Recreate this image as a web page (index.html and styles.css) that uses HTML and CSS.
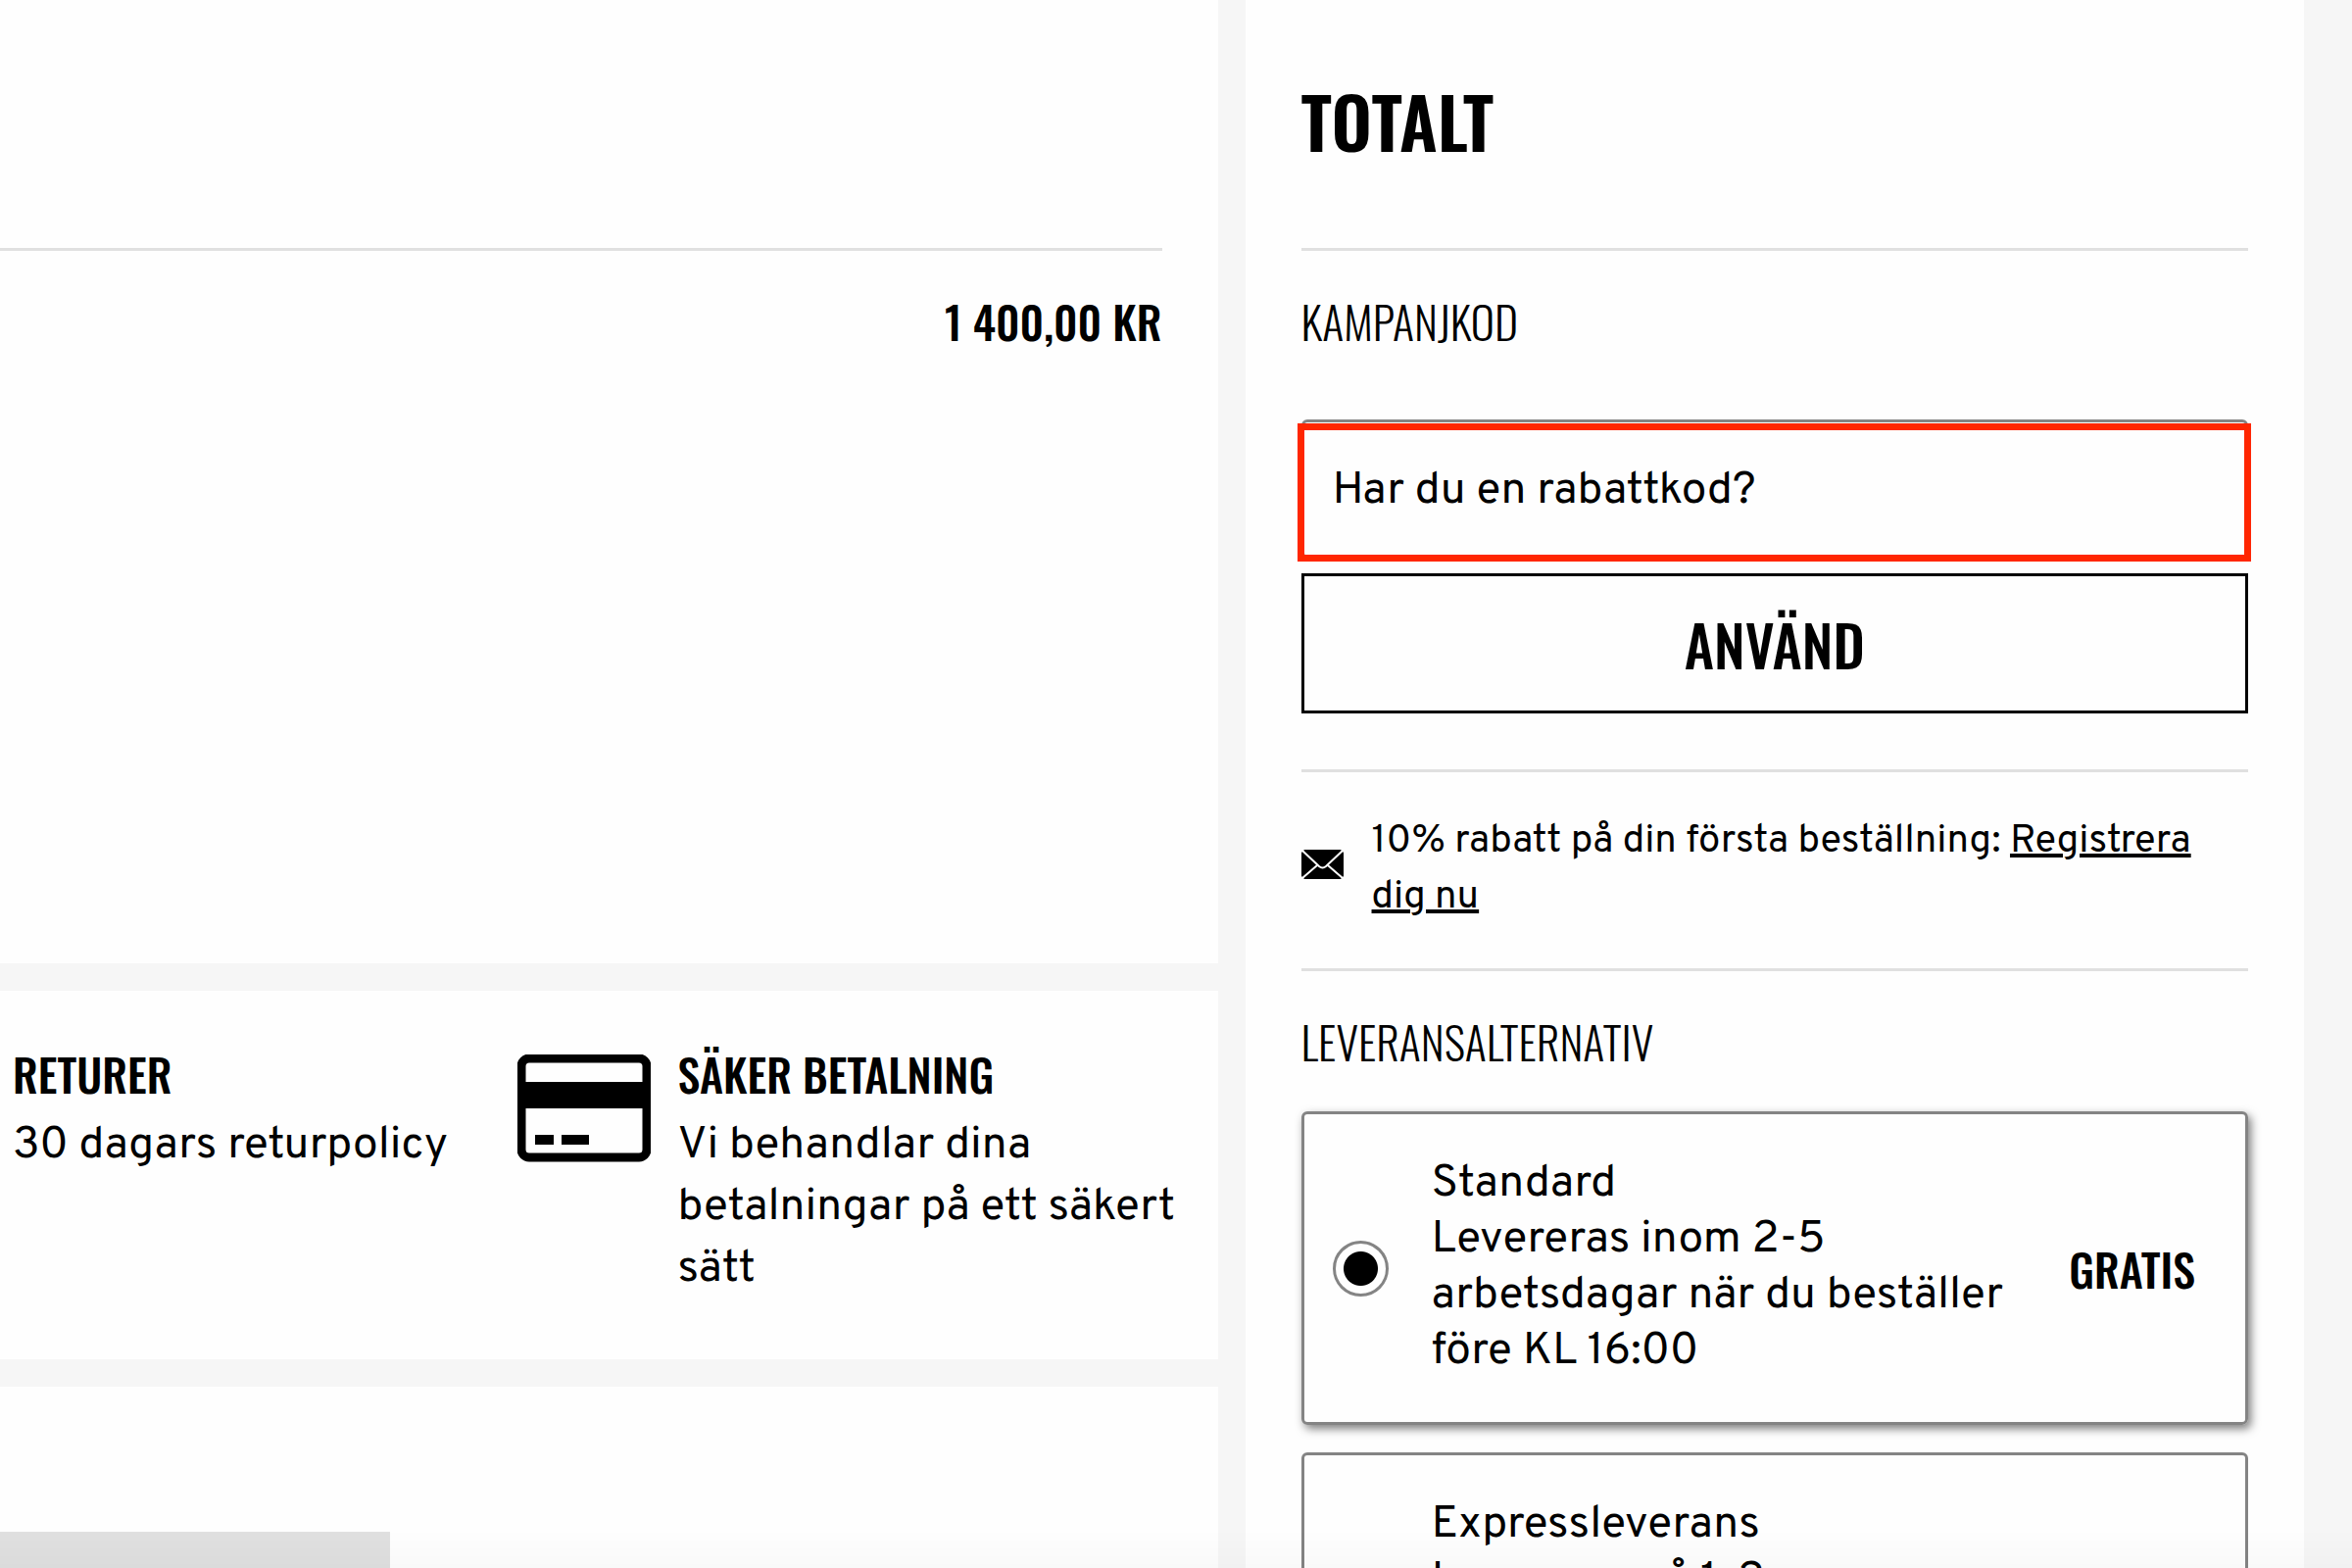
FILE: index.html
```
<!DOCTYPE html>
<html lang="sv">
<head>
  <meta charset="UTF-8" />
  <meta name="viewport" content="width=device-width, initial-scale=1.0"/>
  <title>Varukorg</title>
  <link rel="stylesheet" href="styles.css">
</head>
<body>

  <div class="cart">
    <main class="cart-main">
      <section class="panel items">
        <div class="items-head"></div>
        <p class="item-price">1 400,00 KR</p>
      </section>

      <section class="panel usps">
        <div class="usp">
          <div>
            <h3>RETURER</h3>
            <p>30 dagars returpolicy</p>
          </div>
        </div>
        <div class="usp">
          <svg class="icon-card" viewBox="0 0 136 110">
            <rect x="4" y="4" width="128" height="101" rx="8" fill="none" stroke="#000" stroke-width="9"/>
            <path d="M4 28h128v27H4zM18 82h19v10H18zM45 82h28v10H45z"/>
          </svg>
          <div>
            <h3>SÄKER BETALNING</h3>
            <p>Vi behandlar dina betalningar på ett säkert sätt</p>
          </div>
        </div>
      </section>

      <section class="panel recommended">
        <div class="product-thumb"></div>
      </section>
    </main>

    <aside class="panel summary">
      <h1>TOTALT</h1>

      <form class="promo">
        <label class="section-title" for="promo">KAMPANJKOD</label>
        <div class="promo-field">
          <input type="text" id="promo" placeholder="Har du en rabattkod?">
        </div>
        <button type="button" class="btn">ANVÄND</button>
      </form>

      <div class="newsletter">
        <svg class="icon-mail" viewBox="0 0 43 30">
          <path d="M3 0h37l3 3v24l-3 3H3l-3-3V3z"/>
          <path d="M1 1l17 16q3.500 3 7 0L42 1M1 29l15-13M42 29L27 16" fill="none" stroke="#fff" stroke-width="2"/>
        </svg>
        <p>10% rabatt på din första beställning: <a href="#">Registrera dig nu</a></p>
      </div>

      <div class="delivery">
        <h2 class="section-title">LEVERANSALTERNATIV</h2>
        <label class="option selected">
          <input type="radio" name="delivery" checked>
          <span class="option-text">Standard<br>Levereras inom 2-5 arbetsdagar när du beställer före KL 16:00</span>
          <strong>GRATIS</strong>
        </label>
        <label class="option">
          <input type="radio" name="delivery">
          <span class="option-text">Expressleverans<br>Levereras på 1-2 arbetsdagar när du beställer före KL 16:00</span>
          <strong>99 KR</strong>
        </label>
      </div>
    </aside>
  </div>

  <div class="bottom-shade"></div>

</body>
</html>
```
FILE: styles.css
```
* {
  box-sizing: border-box;
}

body {
  font-family: Overpass, Roboto, sans-serif;
  font-size: 46px;
  line-height: 57px;
  margin: 0;
  height: 100vh;
  overflow: hidden;
  background: #f6f6f6;
  color: #000;
}

h1, h2, h3, p {
  margin: 0;
}

h1, h3, .section-title, .item-price, .btn, .option strong {
  font-family: Oswald, "Liberation Sans Narrow", sans-serif;
  font-weight: 500;
}

.cart {
  display: grid;
  grid-template-columns: 1.15fr 1fr;
  gap: 28px;
  padding-right: 49px;
  min-height: 100vh;
}

.cart-main {
  display: flex;
  flex-direction: column;
  gap: 28px;
  height: 100vh;
}

.panel {
  background: #fefefe;
}

.items {
  height: 983px;
  padding-right: 57px;
}

.items-head {
  height: 256px;
  border-bottom: 3px solid #e0e0e0;
}

.item-price {
  padding-top: 43px;
  text-align: right;
}

.usps {
  display: grid;
  grid-template-columns: 3fr 4fr;
  padding: 56px 29px 57px 13px;
  height: 376px;
}

.usp {
  display: flex;
  align-items: flex-start;
  gap: 28px;
}

.usp h3 {
  margin-bottom: 14px;
  font-size: 46px;
  line-height: 57px;
}

.usp p {
  line-height: 63px;
}

.icon-card {
  flex: none;
  width: 136px;
  margin-top: 9px;
}

.recommended {
  flex: 1;
  padding-top: 148px;
}

.product-thumb {
  width: 32%;
  height: 100%;
  background: #e0e0e0;
}

.summary {
  padding: 0 57px;
}

h1 {
  height: 256px;
  padding-top: 77px;
  font-size: 72px;
  font-weight: 600;
  line-height: 92px;
  border-bottom: 3px solid #e0e0e0;
}

.section-title {
  display: block;
  font-size: 46px;
  font-weight: 300;
}

.promo {
  padding: 43px 0 57px;
  border-bottom: 3px solid #e0e0e0;
}

.promo-field {
  position: relative;
  margin: 72px 0 15px;
}

.promo-field input {
  display: block;
  width: 100%;
  height: 142px;
  padding: 4px 29px 0;
  border: 3px solid #848484;
  border-radius: 6px;
  background: #fefefe;
  font: inherit;
}

.promo-field input::placeholder {
  color: #000;
}

/* red frame over the field */
.promo-field::after {
  content: "";
  position: absolute;
  inset: 4px -3px -3px -4px;
  border: 7px solid #ff2600;
  pointer-events: none;
}

.btn {
  display: block;
  width: 100%;
  height: 143px;
  border: 3px solid #000;
  background: #fefefe;
  color: #000;
  font-size: 58px;
  cursor: pointer;
}

.newsletter {
  display: flex;
  align-items: center;
  gap: 29px;
  padding: 43px 0;
  font-size: 40px;
  border-bottom: 3px solid #e0e0e0;
}

.newsletter a {
  color: inherit;
}

.icon-mail {
  flex: none;
  width: 43px;
  margin-bottom: 12px;
}

.delivery {
  padding-top: 43px;
}

.delivery .section-title {
  margin-bottom: 43px;
}

.option {
  display: flex;
  align-items: center;
  gap: 44px;
  height: 320px;
  margin-bottom: 28px;
  padding: 0 51px 0 29px;
  border: 3px solid #848484;
  border-radius: 6px;
  cursor: pointer;
}

.option.selected {
  box-shadow: 3px 4px 10px rgba(0,0,0,0.5);
}

.option input {
  appearance: none;
  flex: none;
  width: 57px;
  height: 57px;
  margin: 0;
  border: 3px solid #848484;
  border-radius: 50%;
}

.option input:checked {
  background: radial-gradient(circle, #000 17px, transparent 18px);
}

.option-text {
  flex: 1;
}

.option strong {
  min-width: 142px;
  text-align: right;
}

.bottom-shade {
  position: fixed;
  bottom: 0;
  left: 0;
  right: 0;
  height: 40px;
  background: linear-gradient(transparent, rgba(0,0,0,0.02));
  pointer-events: none;
}
```
